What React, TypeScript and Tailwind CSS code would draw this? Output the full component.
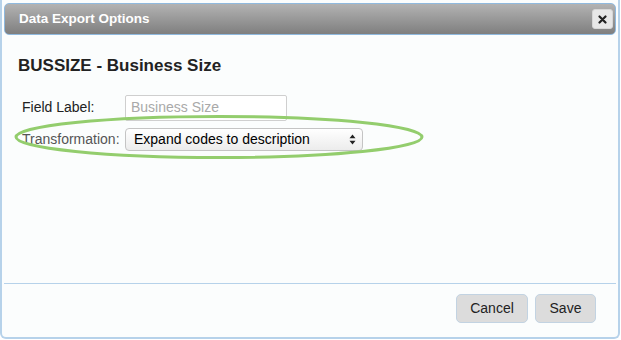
import React from "react";

export default function App() {
  return (
    <div className="w-[621px] h-[340px] bg-white relative" style={{ fontFamily: '"Liberation Sans", Arial, sans-serif' }}>
      <div className="absolute inset-0 left-0 right-[1px] bottom-[1px] border-2 border-t-0 border-[#b6d2ea] rounded-b-[6px] bg-[#fbfdfd] flex flex-col">
        <div className="mx-[2px] mt-[3px] h-[32px] rounded-[5px] border border-[#8fb9de] bg-gradient-to-b from-[#b3b3b3] to-[#7f7f7f] flex items-center justify-between pl-[14px] pr-[2px]">
          <span className="text-white font-bold text-[13.5px]">Data Export Options</span>
          <div className="w-[21px] h-[20px] rounded-[3px] bg-[#e7e7e7] border border-[#d6d6d6] flex items-center justify-center">
            <svg width="9" height="9" viewBox="0 0 9 9"><path d="M1.5 1.5 L7.5 7.5 M7.5 1.5 L1.5 7.5" stroke="#222" strokeWidth="2.2" strokeLinecap="round" /></svg>
          </div>
        </div>
        <div className="flex-1 relative px-[16px]">
          <h1 className="mt-[18px] text-[17px] font-bold text-[#222]">BUSSIZE - Business Size</h1>
          <div className="mt-[16px] flex flex-col gap-[7px] pl-[4px]">
            <div className="flex items-center">
              <span className="w-[103px] text-[14px] text-[#222]">Field Label:</span>
              <div className="w-[162px] h-[26px] border border-[#cfcfcf] rounded-[2px] bg-white flex items-center px-[5px] text-[14px] text-[#a9a9a9]">Business Size</div>
            </div>
            <div className="flex items-center">
              <span className="w-[103px] text-[14px] text-[#555]">Transformation:</span>
              <div className="w-[238px] h-[23px] border border-[#c4c4c4] rounded-[4px] bg-gradient-to-b from-white to-[#ececec] flex items-center justify-between pl-[8px] pr-[6px] text-[14px] text-black">
                <span>Expand codes to description</span>
                <svg width="7" height="11" viewBox="0 0 7 11"><path d="M3.5 0.5 L6.5 4.3 L0.5 4.3 Z M3.5 10.5 L6.5 6.7 L0.5 6.7 Z" fill="#222" /></svg>
              </div>
            </div>
          </div>
          <svg className="absolute left-[11px] top-[79px]" width="414" height="46" viewBox="0 0 414 46">
            <ellipse cx="206" cy="23" rx="203" ry="20.5" fill="none" stroke="#93cd6d" strokeWidth="3" />
          </svg>
        </div>
        <div className="mx-[2px] border-t border-[#b6d2ea] h-[54px] flex items-start pt-[10px] justify-end gap-[7px] pr-[20px]">
          <button className="w-[72px] h-[29px] rounded-[5px] bg-[#dcdcdc] border border-[#c2d3e2] text-[14px] text-[#222]">Cancel</button>
          <button className="w-[61px] h-[29px] rounded-[5px] bg-[#dcdcdc] border border-[#c2d3e2] text-[14px] text-[#222]">Save</button>
        </div>
      </div>
    </div>
  );
}
